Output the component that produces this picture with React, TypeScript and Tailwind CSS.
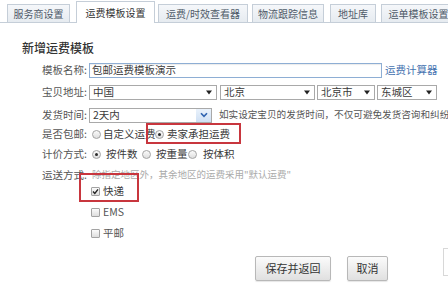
import React from "react";

function Tab({ label, w, active, ml }: { label: string; w: string; active?: boolean; ml: string }) {
  return (
    <div
      className={
        (active
          ? "h-[22px] mb-[-1px] bg-white text-[#333] "
          : "h-[18px] bg-gradient-to-b from-[#f5f7fa] to-[#e6ebf0] text-[#4f5b69] ") +
        "flex shrink-0 items-center justify-center border border-b-0 border-[#c5ced8] " +
        w +
        " " +
        ml
      }
    >
      {label}
    </div>
  );
}

function Arrow() {
  return (
    <svg width="6" height="5" viewBox="0 0 6 5" className="shrink-0">
      <path d="M0 0.5 L6 0.5 L3 4.5 Z" fill="#222" />
    </svg>
  );
}

function Select({ text, w, ml }: { text: string; w: string; ml?: string }) {
  return (
    <div
      className={
        "flex h-[15px] items-center justify-between border border-[#a9a9a9] bg-white pl-[3px] pr-[4px] " +
        w +
        " " +
        (ml ?? "")
      }
    >
      <span className="leading-none">{text}</span>
      <Arrow />
    </div>
  );
}

function Radio({ checked }: { checked?: boolean }) {
  return (
    <span className="flex h-[9px] w-[9px] shrink-0 items-center justify-center rounded-full border border-[#a3a3a3] bg-gradient-to-b from-[#fbfbfb] to-[#dedede]">
      {checked ? <span className="h-[3px] w-[3px] rounded-full bg-[#2a2a2a]" /> : null}
    </span>
  );
}

function Check({ checked }: { checked?: boolean }) {
  return (
    <span className="flex h-[9px] w-[9px] shrink-0 items-center justify-center rounded-[1px] border border-[#a3a3a3] bg-gradient-to-b from-[#fbfbfb] to-[#dedede]">
      {checked ? (
        <svg width="7" height="7" viewBox="0 0 7 7">
          <path d="M1 3.6 L2.8 5.4 L6 1.4" fill="none" stroke="#222" strokeWidth="1.4" />
        </svg>
      ) : null}
    </span>
  );
}

function Label({ text }: { text: string }) {
  return <span className="w-[87px] shrink-0 text-right leading-none text-[#555]">{text}</span>;
}

export default function App() {
  return (
    <div className="relative h-[284px] w-[448px] overflow-hidden bg-white font-['Noto_Sans_CJK_SC',sans-serif] text-[#3a3a3a]">
      {/* tabs */}
      <div className="flex h-[23px] items-end border-b border-[#c5ced8] pl-[7px] text-[10px] leading-none">
        <Tab label="服务商设置" w="w-[63px]" ml="ml-0" />
        <Tab label="运费模板设置" w="w-[79px]" ml="ml-[6px]" active />
        <Tab label="运费/时效查看器" w="w-[90px]" ml="ml-[3px]" />
        <Tab label="物流跟踪信息" w="w-[72px]" ml="ml-[4px]" />
        <Tab label="地址库" w="w-[46px]" ml="ml-[6px]" />
        <Tab label="运单模板设置" w="w-[75px]" ml="ml-[5px]" />
      </div>

      {/* heading */}
      <div className="mt-[17px] pl-[22px] text-[12px] leading-[16px] font-medium text-[#333]">新增运费模板</div>

      <div className="flex flex-col text-[10.5px]">
        {/* row 1 */}
        <div className="mt-[6px] flex h-[16px] items-center">
          <Label text="模板名称:" />
          <div className="ml-[2px] flex h-[15px] w-[293px] items-center border border-[#8eaed4] bg-white pl-[2px] leading-none shadow-[inset_0_1px_1px_rgba(0,0,0,0.08)]">
            包邮运费模板演示
          </div>
          <span className="ml-[3px] whitespace-nowrap leading-none text-[#4673b0]">运费计算器</span>
        </div>

        {/* row 2 */}
        <div className="mt-[6px] flex h-[16px] items-center">
          <Label text="宝贝地址:" />
          <Select text="中国" w="w-[128px]" ml="ml-[2px]" />
          <Select text="北京" w="w-[95px]" ml="ml-[3px]" />
          <Select text="北京市" w="w-[58px]" ml="ml-[2px]" />
          <Select text="东城区" w="w-[60px]" ml="ml-[2px]" />
        </div>

        {/* row 3 */}
        <div className="mt-[7px] flex h-[16px] items-center">
          <Label text="发货时间:" />
          <div className="ml-[2px] flex h-[15px] w-[123px] shrink-0 items-center justify-between border border-[#a9a9a9] bg-white pl-[3px]">
            <span className="leading-none">2天内</span>
            <span className="flex h-[13px] w-[15px] items-center justify-center bg-gradient-to-b from-[#eaf2fb] to-[#cfe0f4]">
              <svg width="8" height="6" viewBox="0 0 8 6">
                <path d="M1 1.2 L4 4.4 L7 1.2" fill="none" stroke="#2f63b0" strokeWidth="1.6" />
              </svg>
            </span>
          </div>
          <span className="ml-[7px] whitespace-nowrap text-[9.6px] leading-none text-[#555]">
            如实设定宝贝的发货时间，不仅可避免发货咨询和纠纷
          </span>
        </div>

        {/* row 4 */}
        <div className="mt-[3px] flex h-[16px] items-center">
          <Label text="是否包邮:" />
          <div className="ml-[5px] flex w-[63px] shrink-0 items-center">
            <Radio />
            <span className="ml-[2px] whitespace-nowrap leading-none">自定义运费</span>
          </div>
          <div className="flex items-center">
            <Radio checked />
            <span className="ml-[3px] whitespace-nowrap leading-none">卖家承担运费</span>
          </div>
        </div>

        {/* row 5 */}
        <div className="mt-[4px] flex h-[16px] items-center">
          <Label text="计价方式:" />
          <div className="ml-[5px] flex w-[50px] shrink-0 items-center">
            <Radio checked />
            <span className="ml-[5px] whitespace-nowrap leading-none">按件数</span>
          </div>
          <div className="flex w-[46px] shrink-0 items-center">
            <Radio />
            <span className="ml-[5px] whitespace-nowrap leading-none">按重量</span>
          </div>
          <div className="flex items-center">
            <Radio />
            <span className="ml-[6px] whitespace-nowrap leading-none">按体积</span>
          </div>
        </div>

        {/* row 6 */}
        <div className="mt-[5px] flex h-[16px] items-center">
          <Label text="运送方式:" />
          <span className="ml-[5px] whitespace-nowrap text-[9.5px] leading-none text-[#aaa]">
            除指定地区外，其余地区的运费采用"默认运费"
          </span>
        </div>

        {/* checkboxes */}
        <div className="flex h-[16px] items-center pl-[91px]">
          <Check checked />
          <span className="ml-[3px] leading-none">快递</span>
        </div>
        <div className="mt-[5px] flex h-[16px] items-center pl-[91px]">
          <Check />
          <span className="ml-[3px] leading-none text-[#555]">EMS</span>
        </div>
        <div className="mt-[5px] flex h-[16px] items-center pl-[91px]">
          <Check />
          <span className="ml-[3px] leading-none text-[#555]">平邮</span>
        </div>

        {/* buttons */}
        <div className="mt-[15px] flex items-center pl-[255px] text-[11px]">
          <button className="flex h-[25px] w-[76px] items-center justify-center rounded-[2px] border border-[#b8b8b8] bg-gradient-to-b from-[#fbfbfb] to-[#e0e0e0] text-[#333] shadow-[0_1px_1px_rgba(0,0,0,0.1)]">
            保存并返回
          </button>
          <button className="ml-[16px] flex h-[25px] w-[41px] items-center justify-center rounded-[2px] border border-[#b8b8b8] bg-gradient-to-b from-[#fbfbfb] to-[#e0e0e0] text-[#333] shadow-[0_1px_1px_rgba(0,0,0,0.1)]">
            取消
          </button>
        </div>
      </div>

      {/* red highlight boxes */}
      <div className="absolute left-[146px] top-[123px] h-[21px] w-[95px] border-2 border-[#c8363e]" />
      <div className="absolute left-[79px] top-[173px] h-[29px] w-[60px] border-2 border-[#c8363e]" />

      {/* partial element on right edge */}
      <div className="absolute left-[443px] top-[248px] h-[28px] w-[20px] border border-[#d8d8d8]" />
    </div>
  );
}
